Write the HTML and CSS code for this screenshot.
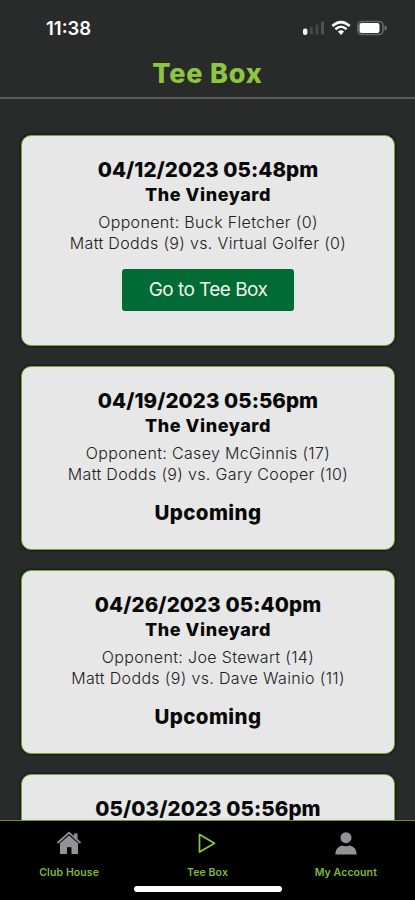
FILE: index.html
```html
<!DOCTYPE html>
<html lang="en">
<head>
<meta charset="utf-8">
<meta name="viewport" content="width=device-width, initial-scale=1">
<title>Tee Box</title>
<link rel="stylesheet" href="styles.css">
</head>
<body>
<div class="app">
  <div class="status">
    <span class="time">11:38</span>
    <svg class="status-icons" width="88" height="20" viewBox="0 0 88 20">
      <rect x="3" y="10.500" width="4.400" height="6.500" rx="2" fill="#fff"/>
      <rect x="10" y="9" width="2.800" height="7.500" rx="1" fill="#484a4a"/>
      <rect x="15.500" y="6.500" width="2.800" height="10" rx="1" fill="#484a4a"/>
      <rect x="21" y="3.500" width="3" height="13" rx="1" fill="#505252"/>
      <g fill="none" stroke="#fff" stroke-width="2.500">
        <path d="M32.300 8Q41 .200 49.700 8"/>
        <path d="M35.400 11.200Q41 6.400 46.600 11.200"/>
      </g>
      <path d="M37.900 13.400Q41 11 44.100 13.400L41 16.900Z" fill="#fff"/>
      <rect x="58" y="3.500" width="25" height="13" rx="4" fill="none" stroke="#666868" stroke-width="1.700"/>
      <rect x="59.500" y="5" width="20" height="10" rx="2.200" fill="#fff"/>
      <path d="M84.500 7.500Q87 8 87 10T84.500 12.500Z" fill="#707272"/>
    </svg>
  </div>
  <header class="header"><h1>Tee Box</h1></header>
  <main class="matches">
    <article class="card card-active">
      <h2 class="date">04/12/2023 05:48pm</h2>
      <h3 class="venue">The Vineyard</h3>
      <p class="opponent">Opponent: Buck Fletcher (0)</p>
      <p class="players">Matt Dodds (9) vs. Virtual Golfer (0)</p>
      <button class="go">Go to Tee Box</button>
    </article>
    <article class="card">
      <h2 class="date">04/19/2023 05:56pm</h2>
      <h3 class="venue">The Vineyard</h3>
      <p class="opponent">Opponent: Casey McGinnis (17)</p>
      <p class="players">Matt Dodds (9) vs. Gary Cooper (10)</p>
      <p class="state">Upcoming</p>
    </article>
    <article class="card">
      <h2 class="date date-wide">04/26/2023 05:40pm</h2>
      <h3 class="venue">The Vineyard</h3>
      <p class="opponent">Opponent: Joe Stewart (14)</p>
      <p class="players">Matt Dodds (9) vs. Dave Wainio (11)</p>
      <p class="state">Upcoming</p>
    </article>
    <article class="card">
      <h2 class="date date-wide">05/03/2023 05:56pm</h2>
    </article>
  </main>
  <footer class="footer">
    <nav class="tabs">
      <a class="tab">
        <svg width="26" height="26" viewBox="0 0 26 26" fill="#929297">
          <path d="M4 13.200 13 5.500 22 13.200V24H15.500V17.200H11V24H4Z"/>
          <path d="M18 3.500H21.500V9.500L18 6.500Z"/>
          <path d="M1.500 13 13 2.700 24.500 13" fill="none" stroke="#929297" stroke-width="1.700"/>
          <path d="M3.200 13.700 13 5 22.800 13.700" fill="none" stroke="#4c4c50" stroke-width=".6"/>
        </svg>
        <span>Club House</span>
      </a>
      <a class="tab">
        <svg width="26" height="26" viewBox="0 0 26 26"><path d="M5.500 4.500V22L20.500 13.200Z" fill="none" stroke="#8dc63f" stroke-width="1.700" stroke-linejoin="round"/></svg>
        <span>Tee Box</span>
      </a>
      <a class="tab">
        <svg width="26" height="26" viewBox="0 0 26 26" fill="#929297"><circle cx="13" cy="7.700" r="5.500"/><path d="M2.300 24.500Q2.500 17 9 15.500Q13 17 17 15.500Q23.500 17 23.700 24.500Z"/></svg>
        <span>My Account</span>
      </a>
    </nav>
    <div class="home-bar"></div>
  </footer>
</div>
</body>
</html>
```

FILE: styles.css
```css
* { box-sizing: border-box; margin: 0; padding: 0; }
body { background: #292b2b; font-family: Inter, sans-serif; }
.app { height: 900px; width: 415px; display: flex; flex-direction: column; overflow: hidden; }
.status { height: 56px; flex: none; display: flex; justify-content: space-between; align-items: center; padding: 0 27px 0 46px; color: #fff; }
.time { font-size: 18.5px; font-weight: 600; letter-spacing: 0; }
.header { height: 43px; flex: none; border-bottom: 2px solid #5b5d5d; text-align: center; }
.header h1 { font-size: 27px; line-height: 35px; font-weight: 800; letter-spacing: .8px; color: #8dc63f; }
.matches { flex: 1; min-height: 0; overflow: hidden; padding: 35.500px 20px 0 21px; display: flex; flex-direction: column; gap: 20px; }
.card { flex: none; height: 184px; border: 1px solid #75a737; border-radius: 10px; background: #e7e7e7; padding-top: 20px; text-align: center; color: #080808; box-shadow: 0 0 2px 1px #17181c; }
.card-active { height: 211px; }
.date { font-size: 20.5px; line-height: 28px; font-weight: 800; letter-spacing: .05px; }
.date-wide { letter-spacing: .1px; }
.venue { font-size: 18px; line-height: 22px; font-weight: 800; letter-spacing: .55px; }
.opponent, .players { font-size: 16px; line-height: 21px; font-weight: 300; letter-spacing: .34px; color: #202020; white-space: nowrap; }
.opponent { margin-top: 6px; }
.go { margin-top: 15px; width: 172px; height: 42px; border: 0; border-radius: 3px; background: #006b35; color: #f3f4e9; font: 400 19px Inter, sans-serif; letter-spacing: -.55px; }
.state { margin-top: 14px; font-size: 20.5px; line-height: 28px; font-weight: 800; letter-spacing: .4px; }
.footer { flex: none; height: 80px; border-top: 1px solid #66952b; background: #000; }
.tabs { height: 65px; display: grid; grid-template-columns: repeat(3, 1fr); padding-top: 9px; }
.tab { display: flex; flex-direction: column; align-items: center; color: #82b83a; font-size: 10.5px; font-weight: 600; line-height: 14px; letter-spacing: .1px; }
.tab span { margin-top: 10px; }
.home-bar { width: 148px; height: 6px; margin: 0 auto; border-radius: 3px; background: #fff; }
```
